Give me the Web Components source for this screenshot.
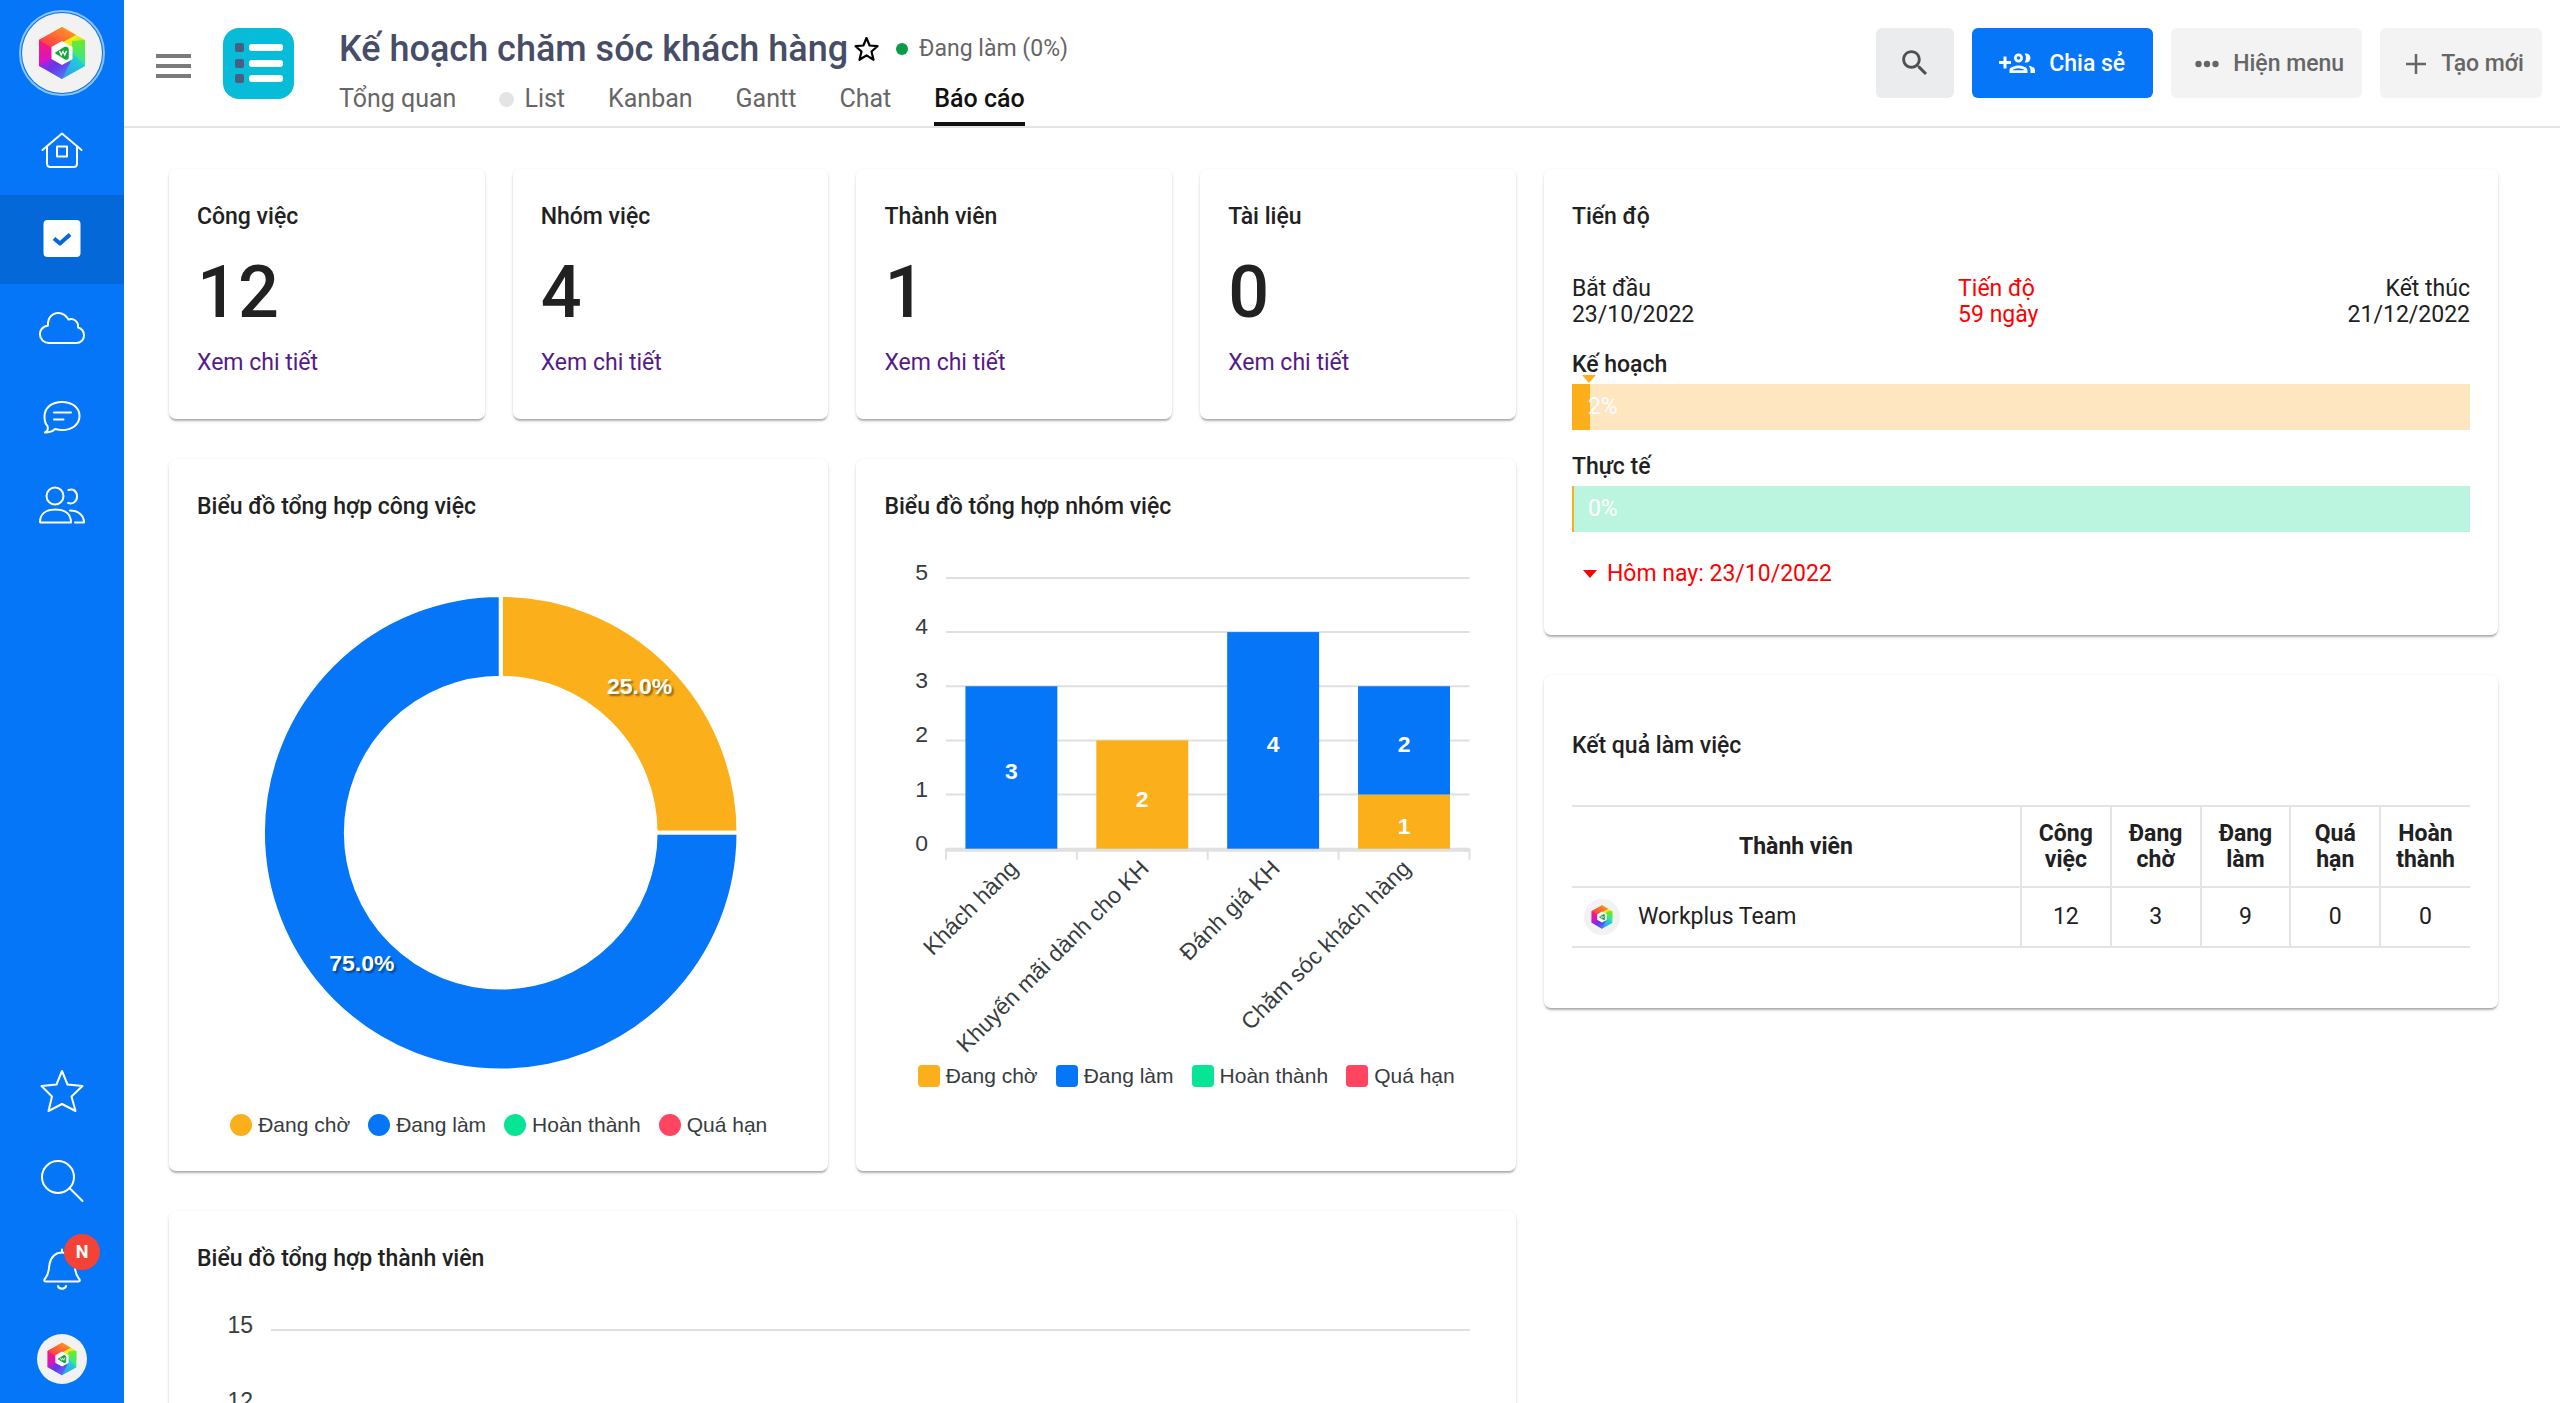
<!DOCTYPE html>
<html lang="vi">
<head>
<meta charset="utf-8">
<title>Kế hoạch chăm sóc khách hàng</title>
<style>
  html, body { margin: 0; height: 100%; }
  body {
    font-family: Roboto, "Liberation Sans", sans-serif;
    font-size: 23px; line-height: 28px; color: #212121; background: #fff;
    --blue: #0476f7; --blue-dark: #0468d8; --orange: #fbb01b; --green: #06e596; --red: #ff455f; --line: #e4e4e4;
  }
</style>
</head>
<body>
<work-app></work-app>

<script>
const define = (name, html, setup) => {
  const template = document.createElement('template');
  template.innerHTML = '<style>*{box-sizing:border-box}</style>' + html;
  customElements.define(name, class extends HTMLElement {
    connectedCallback() {
      if (this.shadowRoot) return;
      this.attachShadow({ mode: 'open' }).append(template.content.cloneNode(true));
      if (setup) setup(this.shadowRoot, this);
    }
  });
};

/* Round rainbow hexagon mark */
define('brand-logo', `
  <style>:host{display:block} svg{display:block;width:100%;height:100%}</style>
  <svg viewBox="-40 -40 80 80" aria-hidden="true">
    <defs>
      <linearGradient id="a" x1="0" y1="1" x2="1" y2="0"><stop offset="0" stop-color="#ff2a4f"/><stop offset="1" stop-color="#ffa51c"/></linearGradient>
      <linearGradient id="b" x1="0" y1="0" x2="1" y2="1"><stop offset="0" stop-color="#f7b516"/><stop offset=".5" stop-color="#f0f01a"/><stop offset="1" stop-color="#7be01e"/></linearGradient>
      <linearGradient id="c" x1="0" y1="0" x2="0" y2="1"><stop offset="0" stop-color="#6fe82a"/><stop offset="1" stop-color="#17e8c0"/></linearGradient>
      <linearGradient id="d" x1="1" y1="0" x2="0" y2="1"><stop offset="0" stop-color="#1fe0d0"/><stop offset="1" stop-color="#2f8df5"/></linearGradient>
      <linearGradient id="e" x1="1" y1="1" x2="0" y2="0"><stop offset="0" stop-color="#4d8cff"/><stop offset=".5" stop-color="#6a35e6"/><stop offset="1" stop-color="#c31ee0"/></linearGradient>
      <linearGradient id="f" x1="0" y1="1" x2="0" y2="0"><stop offset="0" stop-color="#d011d8"/><stop offset="1" stop-color="#ff1f5a"/></linearGradient>
    </defs>
    <circle r="40" fill="#f2f2f2"/>
    <path d="M-23-13L0-26L14-18L-10-6L-10 6L-23-1Z" fill="url(#a)"/>
    <path d="M0-26L23-13L23 2L10-6L0-11L-8-7Z" fill="url(#b)"/>
    <path d="M23-13L23 13L12 19L10 6L10-6L10-12Z" fill="url(#c)"/>
    <path d="M23 13L0 26L-12 19L0 11L10 6L10 -1Z" fill="url(#d)"/>
    <path d="M0 26L-23 13L-23 0L-10 6L0 11L9 8Z" fill="url(#e)"/>
    <path d="M-23 13L-23-13L-11-19L-10-6L-10 6Z" fill="url(#f)"/>
    <path d="M-23-13L0-26L14-18L-10-5Z" fill="url(#a)"/>
    <path d="M0-12L10.500-6V6L0 12L-10.500 6V-6Z" fill="#fff"/>
    <path d="M-6 0L3-5.500Q6-6 6-3V4Q6 7 3 5.500Z" fill="#16a53a" stroke="#16a53a" stroke-width="1.500" stroke-linejoin="round"/>
    <path d="M-2.500-2L-.8 2L1-1.500L2.800 2L4.500-2" fill="none" stroke="#fff" stroke-width="1.300"/>
  </svg>`);

define('app-sidebar', `
  <style>
    :host{display:flex;flex-direction:column;flex:none;width:124px;background:var(--blue)}
    .brand{display:flex;height:106px;align-items:center;justify-content:center}
    .ring{width:86px;height:86px;padding:1px;border:2px solid #8cc1fb;border-radius:50%}
    .ring brand-logo{height:80px}
    nav{display:flex;flex-direction:column}
    nav:last-of-type{margin-top:auto}
    a{display:flex;height:89px;align-items:center;justify-content:center;color:#fff}
    a.on{background:var(--blue-dark)}
    svg{display:block;width:48px;height:48px;margin-bottom:2px;fill:none;stroke:#fff;stroke-width:2;stroke-linejoin:round;stroke-linecap:round}
    .bell{position:relative}
    .badge{position:absolute;left:64px;top:9px;width:36px;height:36px;border-radius:50%;background:#f44336;color:#fff;font-size:18px;font-weight:700;line-height:36px;text-align:center}
    .me{width:50px;height:50px}
  </style>
  <div class="brand"><div class="ring"><brand-logo></brand-logo></div></div>
  <nav aria-label="Chính">
    <a href="#" aria-label="Trang chủ"><svg viewBox="0 0 48 48"><path d="M4.500 24L24 7.500L43.500 24M9 21V37.500Q9 41 12.500 41H35.500Q39 41 39 37.500V21M19 20.500H29V30.500H19Z"/></svg></a>
    <a href="#" class="on" aria-label="Công việc"><svg viewBox="0 0 48 48"><rect x="6.500" y="6" width="35" height="35" rx="3" fill="#fff"/><path d="M16 23.500L22 28.500L32 19.500" stroke="#0468d8" stroke-width="4" stroke-linecap="butt"/></svg></a>
    <a href="#" aria-label="Tài liệu"><svg viewBox="0 0 48 48"><path d="M11 39H38C43 39 46 35.500 46 31.500C46 27.500 43.500 24.500 40 23.500C41 17.500 35 13.500 30.500 15.500C28 11.500 24.500 9 20.500 9C14 9 9.500 14 10 21.500C5 22.500 2 26 2 30.500C2 35.500 6 39 11 39Z"/></svg></a>
    <a href="#" aria-label="Trò chuyện"><svg viewBox="0 0 48 48"><path d="M7 39.500C10 38 10.500 36 9.500 33C7 30.500 6.500 27 6.500 23.500C6.500 14.500 14 9 24 9C34 9 41.500 14.500 41.500 23C41.500 31.500 34 37 24 37C21 37 19 36.500 17 36C14.500 38.500 11 39.500 7 39.500ZM16 19.500H33M16 26.500H25.500"/></svg></a>
    <a href="#" aria-label="Thành viên"><svg viewBox="0 0 48 48"><circle cx="17" cy="14" r="8.500"/><path d="M30.500 8C35 6 39 9.500 39 14.500C39 19.500 35 22.500 30 21M2 40C2 32 8 27.500 17.500 27.500C27 27.500 33 32 33 40.500H2.500ZM32 28.500C40 28.500 46 33 46 40.500H37"/></svg></a>
  </nav>
  <nav aria-label="Cá nhân">
    <a href="#" aria-label="Yêu thích"><svg viewBox="0 0 48 48"><path d="M24 4L29.500 17.500L44.500 19L33.500 29.500L37.500 44L24 37L10.500 44L14 29.500L3.500 19L18.500 17.500Z"/></svg></a>
    <a href="#" aria-label="Tìm kiếm"><svg viewBox="0 0 48 48"><circle cx="20" cy="21" r="16"/><path d="M32 32.500L44.500 45"/></svg></a>
    <a href="#" class="bell" aria-label="Thông báo"><svg viewBox="0 0 48 48"><path d="M24 4.500V7M8 36.500C5.500 36.500 6 34.500 7.500 33C11 29 10.500 25 11.500 19.500C12.500 12 17.500 7.500 24 7.500C30.500 7.500 35.500 12 36.500 19.500C37.500 25 37 29 40.500 33C42 34.500 42.500 36.500 40 36.500ZM20 41C20.500 44.500 27.500 44.500 28 41"/></svg><span class="badge">N</span></a>
    <a href="#" aria-label="Hồ sơ"><brand-logo class="me"></brand-logo></a>
  </nav>`);

define('app-header', `
  <style>
    :host{display:flex;align-items:flex-start;height:128px;flex:none;padding:28px 18px 0 32px;border-bottom:2px solid var(--line);color:#666}
    button{border:0;padding:0;background:none;font:inherit;color:inherit;display:flex;align-items:center}
    .menu{margin:26px 32px 0 0}
    svg{display:block;flex:none}
    .text{margin-left:45px}
    .row,.tabs,.actions{display:flex;align-items:center}
    h1{margin:0;font-size:36px;line-height:42px;font-weight:500;color:#474d66}
    .fav{margin:0 17px 0 6px}
    .dot{width:12px;height:12px;border-radius:50%;background:#0a9a48;margin-right:11px}
    .tabs{margin-top:15px;gap:43px;font-size:25px}
    .tabs a{display:flex;align-items:center;color:inherit;text-decoration:none;padding-bottom:9px;border-bottom:4px solid transparent}
    .tabs a.on{color:#111;font-weight:500;border-color:#111}
    .tabs i{width:15px;height:15px;border-radius:50%;background:#e4e4e4;margin-right:10px}
    .actions{margin-left:auto;gap:18px}
    .actions button{height:70px;border-radius:6px;background:#f3f3f3;font-weight:500;color:#666}
    .actions .find{width:78px;justify-content:center;background:#ebecee}
    .actions .share{background:var(--blue);color:#fff;padding:0 28px 0 27px;gap:14px}
    .actions .more{padding:0 18px 0 24px;gap:14px}
    .actions .new{padding:1px 18px 0 25px;gap:14px}
    .actions .share,.actions .more{padding-top:1px}
  </style>
  <button class="menu" aria-label="Menu"><svg width="35" height="24" viewBox="0 0 35 24" fill="#7b7b7b"><path d="M0 0H35V4H0ZM0 10H35V14H0ZM0 20H35V24H0Z"/></svg></button>
  <svg width="71" height="71" viewBox="0 0 71 71"><rect width="71" height="71" rx="16" fill="#06bcd9"/><g fill="#4a5f7f"><rect x="12" y="15" width="9" height="9" rx="2"/><rect x="12" y="31" width="9" height="9" rx="2"/><rect x="12" y="46" width="9" height="9" rx="2"/></g><g fill="#fff"><rect x="26" y="16" width="34" height="7" rx="3"/><rect x="26" y="32" width="34" height="7" rx="3"/><rect x="26" y="47" width="34" height="7" rx="3"/></g></svg>
  <div class="text">
    <div class="row">
      <h1>Kế hoạch chăm sóc khách hàng</h1>
      <button class="fav" aria-label="Đánh dấu sao"><svg width="25" height="25" viewBox="0 0 25 25" fill="none" stroke="#000" stroke-width="2.200" stroke-linejoin="round"><path d="M12.500 1L15.600 8.500L23.500 9.200L17.500 14.500L19.500 22.800L12.500 18.400L5.500 22.800L7.500 14.500L1.500 9.200L9.400 8.500Z"/></svg></button>
      <span class="dot"></span><span>Đang làm (0%)</span>
    </div>
    <nav class="tabs"><a href="#">Tổng quan</a><a href="#"><i></i>List</a><a href="#">Kanban</a><a href="#">Gantt</a><a href="#">Chat</a><a href="#" class="on">Báo cáo</a></nav>
  </div>
  <div class="actions">
    <button class="find" aria-label="Tìm kiếm"><svg width="34" height="34" viewBox="0 0 24 24" fill="#505050"><path d="M15.500 14h-.79l-.28-.27C15.410 12.590 16 11.110 16 9.500 16 5.910 13.090 3 9.500 3S3 5.910 3 9.500 5.910 16 9.500 16c1.610 0 3.090-.59 4.230-1.570l.27.28v.79l5 4.990L20.490 19l-4.990-5zm-6 0C7.010 14 5 11.990 5 9.500S7.010 5 9.500 5 14 7.010 14 9.500 11.990 14 9.500 14z"/></svg></button>
    <button class="share"><svg width="36" height="36" viewBox="0 0 24 24" fill="#fff"><path d="M8 10H5V7H3v3H0v2h3v3h2v-3h3v-2zm10 1c1.660 0 2.990-1.340 2.990-3S19.660 5 18 5c-.32 0-.63.05-.91.14.57.81.9 1.790.9 2.860s-.34 2.040-.9 2.860c.28.09.59.14.91.14zm-5 0c1.660 0 2.990-1.340 2.990-3S14.660 5 13 5c-1.660 0-3 1.340-3 3s1.340 3 3 3zm6.620 2.160c.83.73 1.380 1.660 1.380 2.840v2h3v-2c0-1.540-2.370-2.490-4.380-2.840zM13 13c-2 0-6 1-6 3v2h12v-2c0-2-4-3-6-3z"/><g fill="#0476f7"><circle cx="13" cy="8" r="1.200"/><path d="M9 16.200c.3-.7 2.400-1.400 4-1.400s3.700.7 4 1.400z"/></g></svg>Chia sẻ</button>
    <button class="more"><svg width="24" height="8" viewBox="0 0 24 8" fill="#666"><circle cx="3.500" cy="4" r="3.200"/><circle cx="12" cy="4" r="3.200"/><circle cx="20.500" cy="4" r="3.200"/></svg>Hiện menu</button>
    <button class="new"><svg width="22" height="22" viewBox="0 0 22 22" stroke="#666" stroke-width="2.500"><path d="M11 1V21M1 11H21"/></svg>Tạo mới</button>
  </div>`);

/* White raised panel with a heading */
define('dash-card', `
  <style>
    :host{display:block;min-width:0;padding:34px 28px 32px;border-radius:7px;background:#fff;box-shadow:0 3px 2px -1px rgba(0,0,0,.22),0 1px 2px rgba(0,0,0,.12),0 2px 5px rgba(0,0,0,.07)}
    h2{margin:0;font-size:inherit;line-height:inherit;font-weight:500}
  </style>
  <h2></h2><slot></slot>`,
  (root, el) => { root.querySelector('h2').textContent = el.getAttribute('heading'); });

define('stat-value', `
  <style>
    :host{display:block;padding:20px 0 10px}
    .n{font-size:72px;line-height:84px;font-weight:500;margin-bottom:14px}
    a{display:block;color:#551a8b;text-decoration:none}
  </style>
  <div class="n"><slot></slot></div><a href="#">Xem chi tiết</a>`);

define('chart-legend', `
  <style>
    :host{display:flex;justify-content:center;gap:18px;font-family:"Liberation Sans",sans-serif;font-size:21px;color:#373d3f}
    span{display:flex;align-items:center;gap:6px}
    i{width:22px;height:22px;border-radius:4px}
    :host([round]) i{border-radius:50%}
  </style>
  <span><i style="background:var(--orange)"></i>Đang chờ</span><span><i style="background:var(--blue)"></i>Đang làm</span><span><i style="background:var(--green)"></i>Hoàn thành</span><span><i style="background:var(--red)"></i>Quá hạn</span>`);

const chartCss = `<style>
  :host{display:block}
  svg{display:block;width:100%;overflow:visible;font:23px "Liberation Sans",sans-serif;fill:#373d3f}
  .v{fill:#fff;font-weight:700;text-anchor:middle}
  .e{text-anchor:end}
</style>`;

define('donut-chart', chartCss + `
  <style>.v{text-shadow:2px 2px 2px rgba(0,0,0,.45)}</style>
  <svg viewBox="0 3 604 591" role="img" aria-label="Công việc theo trạng thái">
    <g stroke="#fff" stroke-width="4">
      <path d="M304 77A238 238 0 0 1 542 315H459A155 155 0 0 0 304 160Z" fill="#fbb01b"/>
      <path d="M542 315A238 238 0 1 1 304 77V160A155 155 0 1 0 459 315Z" fill="#0476f7"/>
    </g>
    <text class="v" x="443" y="176">25.0%</text><text class="v" x="165" y="453">75.0%</text>
  </svg>`);

define('group-chart', chartCss + `<svg viewBox="0 3 604 541" role="img" aria-label="Nhóm việc theo trạng thái"></svg>`, root => {
  const groups = [['Khách hàng', 0, 3], ['Khuyến mãi dành cho KH', 2, 0], ['Đánh giá KH', 0, 4], ['Chăm sóc khách hàng', 1, 2]];
  const left = 62, right = 586, base = 331, step = 54.2, slot = 131, width = 92;
  let out = '';
  for (let i = 0; i <= 5; i++) {
    const y = base - i * step;
    if (i) out += `<path d="M${left} ${y}H${right}" stroke="#e0e0e0" stroke-width="2"/>`;
    out += `<text class="e" x="44" y="${y + 2}">${i}</text>`;
  }
  out += `<path d="M${left} ${base + 1}H${right}" stroke="#e0e0e0" stroke-width="4"/>`;
  for (let i = 0; i <= 4; i++) out += `<path d="M${left + i * slot} ${base}V342" stroke="#e0e0e0" stroke-width="2"/>`;
  groups.forEach(([name, waiting, doing], i) => {
    const mid = left + slot * (i + .5);
    let y = base;
    [[waiting, '#fbb01b'], [doing, '#0476f7']].forEach(([n, color]) => {
      if (!n) return;
      const h = n * step;
      y -= h;
      out += `<rect x="${mid - width / 2}" y="${y}" width="${width}" height="${h}" fill="${color}"/><text class="v" x="${mid}" y="${y + h / 2 + 12}">${n}</text>`;
    });
    out += `<text class="e" transform="translate(${mid + 8} 352) rotate(-45)">${name}</text>`;
  });
  root.querySelector('svg').innerHTML = out;
});

define('member-chart', chartCss + `
  <svg viewBox="0 2 1291 398" role="img" aria-label="Công việc theo thành viên">
    <path d="M74 59H1273M74 135H1273" stroke="#e0e0e0" stroke-width="2"/>
    <text class="e" x="56" y="62">15</text><text class="e" x="56" y="138">12</text>
  </svg>`);

define('progress-bar', `
  <style>
    :host{display:block;margin-top:23px}
    h3{margin:0 0 5px;font-size:inherit;font-weight:500}
    .bar{position:relative;display:grid;height:46px;background:var(--track);color:#fff;line-height:46px}
    .fill,.value{grid-area:1/1}
    .fill{width:var(--fill);background:var(--orange)}
    .value{padding-left:16px}
    .mark{position:absolute;left:10px;top:-9px;border:7px solid transparent;border-top:8px solid var(--orange);border-bottom:0}
    :host(:not([marked])) .mark{display:none}
  </style>
  <h3></h3><div class="bar"><div class="fill"></div><div class="value"><slot></slot></div><span class="mark"></span></div>`,
  (root, el) => { root.querySelector('h3').textContent = el.getAttribute('label'); });

define('schedule-panel', `
  <style>
    :host{display:block;padding-bottom:15px}
    .dates{display:grid;grid-template-columns:43% auto 1fr;margin-top:45px;line-height:26px}
    .mid,.today{color:#f00}
    .end{text-align:right}
    .today{display:flex;align-items:center;gap:10px;margin-top:28px;padding-left:11px}
    .today i{border:7px solid transparent;border-top:8px solid #f00;border-bottom:0}
  </style>
  <div class="dates"><div>Bắt đầu<br>23/10/2022</div><div class="mid">Tiến độ<br>59 ngày</div><div class="end">Kết thúc<br>21/12/2022</div></div>
  <progress-bar label="Kế hoạch" marked style="--track:#fee7c0;--fill:18px">2%</progress-bar>
  <progress-bar label="Thực tế" style="--track:#bbf5df;--fill:2px">0%</progress-bar>
  <div class="today"><i></i>Hôm nay: 23/10/2022</div>`);

define('result-table', `
  <style>
    :host{display:block;padding:45px 0 28px}
    table{width:100%;border-collapse:collapse;table-layout:fixed;line-height:26px}
    th,td{border:2px solid var(--line);border-width:2px 0 2px 2px;padding:0 12px;text-align:center}
    th:first-child,td:first-child{border-left:0;width:50%}
    th{height:81px;font-weight:700}
    td{height:60px}
    .who{display:flex;align-items:center;gap:18px}
    .who brand-logo{width:36px;height:36px}
  </style>
  <table>
    <thead><tr><th>Thành viên</th><th>Công việc</th><th>Đang chờ</th><th>Đang làm</th><th>Quá hạn</th><th>Hoàn thành</th></tr></thead>
    <tbody><tr><td><div class="who"><brand-logo></brand-logo>Workplus Team</div></td><td>12</td><td>3</td><td>9</td><td>0</td><td>0</td></tr></tbody>
  </table>`);

define('work-report', `
  <style>
    :host{display:block;flex:1;min-height:0;overflow:auto;scrollbar-width:none;padding:41px 62px 40px 45px}
    .grid{display:grid;grid-template-columns:repeat(12,minmax(0,1fr));column-gap:28px;align-items:start}
    .left{grid-column:span 7;display:grid;grid-template-columns:repeat(4,minmax(0,1fr));gap:40px 28px}
    .right{grid-column:span 5;display:grid;gap:40px}
    .half{grid-column:span 2}
    .full{grid-column:span 4}
    .results{padding-top:57px}
  </style>
  <div class="grid">
    <div class="left">
      <dash-card heading="Công việc"><stat-value>12</stat-value></dash-card>
      <dash-card heading="Nhóm việc"><stat-value>4</stat-value></dash-card>
      <dash-card heading="Thành viên"><stat-value>1</stat-value></dash-card>
      <dash-card heading="Tài liệu"><stat-value>0</stat-value></dash-card>
      <dash-card class="half" heading="Biểu đồ tổng hợp công việc"><donut-chart></donut-chart><chart-legend round></chart-legend></dash-card>
      <dash-card class="half" heading="Biểu đồ tổng hợp nhóm việc"><group-chart></group-chart><chart-legend></chart-legend></dash-card>
      <dash-card class="full" heading="Biểu đồ tổng hợp thành viên"><member-chart></member-chart></dash-card>
    </div>
    <div class="right">
      <dash-card heading="Tiến độ"><schedule-panel></schedule-panel></dash-card>
      <dash-card class="results" heading="Kết quả làm việc"><result-table></result-table></dash-card>
    </div>
  </div>`);

define('work-app', `
  <style>
    :host{display:flex;height:100vh;overflow:hidden}
    .page{display:flex;flex-direction:column;flex:1;min-width:0}
  </style>
  <app-sidebar></app-sidebar>
  <div class="page"><app-header></app-header><work-report></work-report></div>`);
</script>
</body>
</html>
